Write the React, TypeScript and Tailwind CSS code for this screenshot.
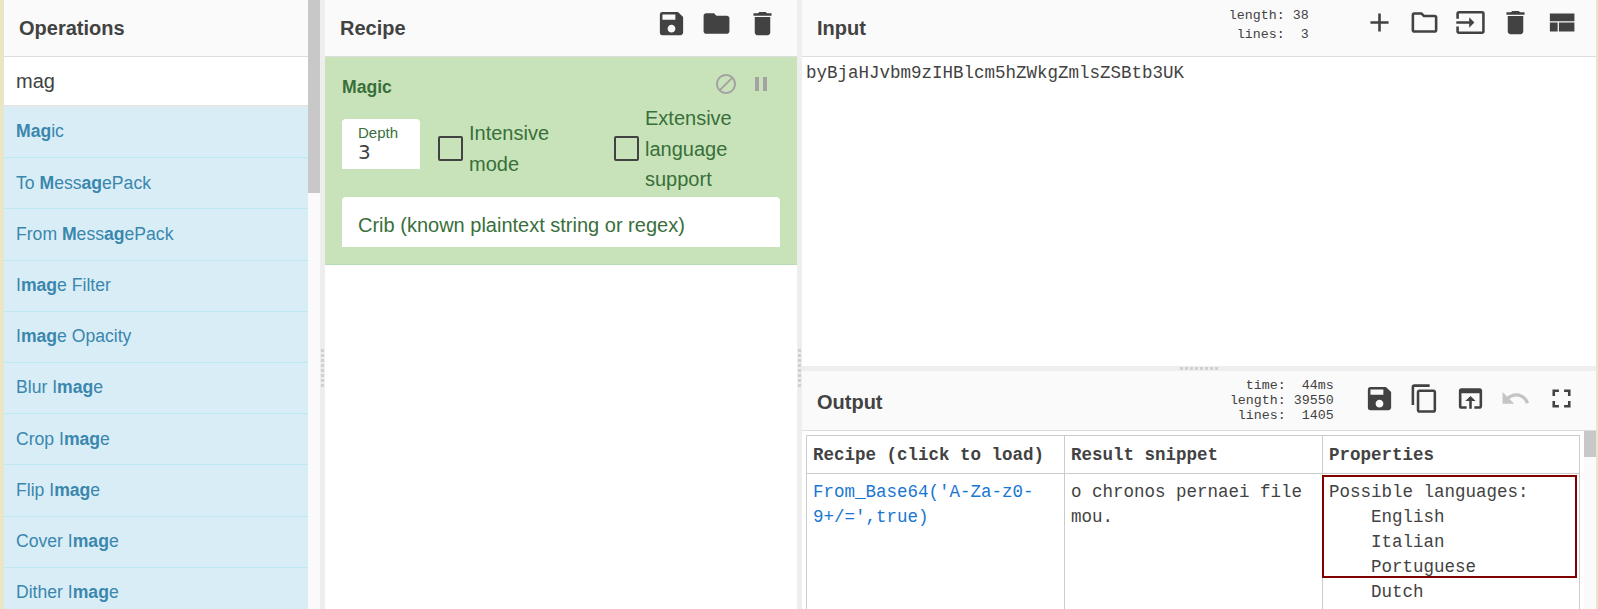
import { MdAdd, MdBlock, MdContentCopy, MdDelete, MdFolder, MdFullscreen, MdInput, MdOpenInBrowser, MdOutlineFolder, MdPause, MdSave, MdUndo } from 'react-icons/md';
import type { ReactNode } from 'react';

const operations: ReactNode[] = [
  <><b>Mag</b>ic</>,
  <>To <b>M</b>ess<b>ag</b>ePack</>,
  <>From <b>M</b>ess<b>ag</b>ePack</>,
  <>I<b>mag</b>e Filter</>,
  <>I<b>mag</b>e Opacity</>,
  <>Blur I<b>mag</b>e</>,
  <>Crop I<b>mag</b>e</>,
  <>Flip I<b>mag</b>e</>,
  <>Cover I<b>mag</b>e</>,
  <>Dither I<b>mag</b>e</>,
];

function GutterDots({ vertical }: { vertical?: boolean }) {
  return (
    <div className={vertical ? 'flex flex-col gap-[2px]' : 'flex gap-[2px]'}>
      {Array.from({ length: 8 }).map((_, i) => (
        <div key={i} className="w-[3px] h-[3px] bg-[#d0d0d0]" />
      ))}
    </div>
  );
}

function PanelTitle({ children }: { children: ReactNode }) {
  return <h2 className="text-[20px] font-bold text-[#424242] leading-none">{children}</h2>;
}

function ViewCompactIcon() {
  return (
    <svg width={31} height={31} viewBox="0 0 24 24" fill="currentColor">
      <path d="M3 19h6v-7H3v7zm7 0h12v-7H10v7zM3 5v6h19V5H3z" />
    </svg>
  );
}

export default function App() {
  return (
    <div className="flex w-[1598px] h-[609px] overflow-hidden bg-white font-['Liberation_Sans',sans-serif] text-[#424242]">
      <div className="w-[4px] shrink-0 bg-[#e8e6c4]" />

      {/* Operations */}
      <div className="flex w-[316px] shrink-0">
        <div className="flex flex-col w-[304px] shrink-0">
          <div className="flex items-center h-[57px] shrink-0 pl-[15px] bg-[#fafafa] border-b border-[#ddd]">
            <PanelTitle>Operations</PanelTitle>
          </div>
          <div className="flex items-center h-[50px] shrink-0 pl-[12px] bg-white border-b-2 border-[#e6e6e6] text-[20px]">
            mag
          </div>
          {operations.map((op, i) => (
            <div
              key={i}
              className="flex items-center h-[51.2px] shrink-0 pl-[12px] pb-[1px] bg-[#d9edf7] border-b border-[#bce8f1] text-[17.6px] text-[#3a87ad]"
            >
              <span>{op}</span>
            </div>
          ))}
        </div>
        <div className="w-[12px] shrink-0 bg-[#fafafa]">
          <div className="h-[193px] bg-[#c8c8c8]" />
        </div>
      </div>

      <div className="flex justify-center w-[5px] shrink-0 pt-[349px] bg-[#eeeeee]">
        <GutterDots vertical />
      </div>

      {/* Recipe */}
      <div className="flex flex-col w-[472px] shrink-0">
        <div className="flex items-center justify-between h-[57px] shrink-0 pl-[15px] pr-[19px] bg-[#fafafa] border-b border-[#ddd]">
          <PanelTitle>Recipe</PanelTitle>
          <div className="flex gap-[14.6px] -mt-[9px] text-[#424242]">
            <MdSave size={31} />
            <MdFolder size={31} />
            <MdDelete size={31} />
          </div>
        </div>
        <div className="flex flex-col h-[208px] shrink-0 bg-[#c8e3b9] border-b border-[#b5dcb7] text-[#386f3a]">
          <div className="flex items-center justify-between h-[62px] shrink-0 pl-[17px] pr-[24px] pb-[2px]">
            <div className="text-[17.6px] font-bold">Magic</div>
            <div className="flex gap-[11px] -mt-[6px] text-[#a3a3a3]">
              <MdBlock size={24} />
              <MdPause size={24} />
            </div>
          </div>
          <div className="flex items-start h-[78px] shrink-0 pl-[17px] pr-[17px]">
            <div className="flex flex-col w-[78px] h-[50px] shrink-0 pl-[16px] pt-[5px] bg-white rounded-t-[4px]">
              <span className="text-[15px] leading-[17px]">Depth</span>
              <span className="text-[20px] leading-[22px] text-[#424242] font-['DejaVu_Sans',sans-serif]">3</span>
            </div>
            <div className="flex items-center w-[176px] h-[50px] shrink-0 ml-[18px] mt-[5px]">
              <div className="w-[25px] h-[25px] mb-[2px] shrink-0 rounded-[2px] border-2 border-[#424242]" />
              <div className="ml-[6px] w-[100px] -mt-[1px] text-[20px] leading-[30.4px]">Intensive mode</div>
            </div>
            <div className="flex items-center h-[50px] shrink-0 mt-[5px]">
              <div className="w-[25px] h-[25px] mb-[2px] shrink-0 rounded-[2px] border-2 border-[#424242]" />
              <div className="ml-[6px] w-[100px] text-[20px] leading-[30.4px]">Extensive language support</div>
            </div>
          </div>
          <div className="flex items-center w-[438px] h-[50px] ml-[17px] pl-[16px] pt-[5px] bg-white rounded-t-[4px] text-[20px]">
            Crib (known plaintext string or regex)
          </div>
        </div>
      </div>

      <div className="flex justify-center w-[5px] shrink-0 pt-[349px] bg-[#eeeeee]">
        <GutterDots vertical />
      </div>

      {/* Input and output */}
      <div className="flex flex-col w-[794px] shrink-0">
        <div className="flex items-center h-[57px] shrink-0 pl-[15px] bg-[#fafafa] border-b border-[#ddd]">
          <PanelTitle>Input</PanelTitle>
          <div className="flex ml-auto items-start -mt-[9px] text-[#424242]">
            <pre className="mr-[55px] mt-[3px] text-[13.3px] leading-[19px] font-['Liberation_Mono',monospace] text-right">{'length: 38\nlines:  3'}</pre>
            <div className="flex gap-[14.6px] pr-[19px] mt-[4px]">
              <MdAdd size={31} />
              <MdOutlineFolder size={31} />
              <MdInput size={31} />
              <MdDelete size={31} />
              <ViewCompactIcon />
            </div>
          </div>
        </div>
        <div className="h-[309px] shrink-0 pl-[4px] pt-[5px] text-[17.5px] leading-[22px] font-['Liberation_Mono',monospace] text-[#424242]">
          byBjaHJvbm9zIHBlcm5hZWkgZmlsZSBtb3UK
        </div>
        <div className="flex items-center justify-center h-[5px] shrink-0 bg-[#eeeeee]">
          <GutterDots />
        </div>
        <div className="flex items-center h-[60px] shrink-0 pl-[15px] pt-[2px] bg-[#fafafa] border-b border-[#ddd]">
          <PanelTitle>Output</PanelTitle>
          <div className="flex ml-auto items-center -mt-[7px]">
            <pre className="mr-[30px] mt-[5px] text-[13.3px] leading-[15px] font-['Liberation_Mono',monospace] text-right">{'time:  44ms\nlength: 39550\nlines:  1405'}</pre>
            <div className="flex gap-[14.6px] pr-[19px]">
              <MdSave size={31} />
              <MdContentCopy size={31} />
              <MdOpenInBrowser size={31} />
              <MdUndo size={31} className="text-[#c4c4c4]" />
              <MdFullscreen size={31} />
            </div>
          </div>
        </div>
        <div className="flex flex-1 min-h-0">
          <div className="flex-1 pl-[4px] pt-[4px] overflow-hidden">
            <table className="table-fixed border-collapse w-[774px] text-[17.5px] leading-[25px] font-['Liberation_Mono',monospace] text-[#424242]">
              <thead>
                <tr>
                  <th className="w-[258px] h-[38px] px-[6px] pt-[2px] text-left font-bold border border-[#ccc]">Recipe (click to load)</th>
                  <th className="w-[258px] h-[38px] px-[6px] pt-[2px] text-left font-bold border border-[#ccc]">Result snippet</th>
                  <th className="h-[38px] px-[6px] pt-[2px] text-left font-bold border border-[#ccc]">Properties</th>
                </tr>
              </thead>
              <tbody>
                <tr>
                  <td className="h-[200px] align-top px-[6px] pt-[6px] border border-[#ccc] text-[#1976d2] break-all">From_Base64('A-Za-z0-<br />9+/=',true)</td>
                  <td className="h-[200px] align-top px-[6px] pt-[6px] border border-[#ccc]">o chronos pernaei file mou.</td>
                  <td className="relative h-[200px] align-top px-[6px] pt-[6px] border border-[#ccc]">
                    <pre className="font-['Liberation_Mono',monospace]">{'Possible languages:\n    English\n    Italian\n    Portuguese\n    Dutch'}</pre>
                    <div className="absolute left-[-1px] top-[1px] w-[255px] h-[103px] border-2 border-[#800000]" />
                  </td>
                </tr>
              </tbody>
            </table>
          </div>
          <div className="w-[12px] shrink-0 bg-[#fafafa]">
            <div className="h-[26px] bg-[#c8c8c8]" />
          </div>
        </div>
      </div>

      <div className="w-[2px] shrink-0 bg-[#e8e6c4]" />
    </div>
  );
}
